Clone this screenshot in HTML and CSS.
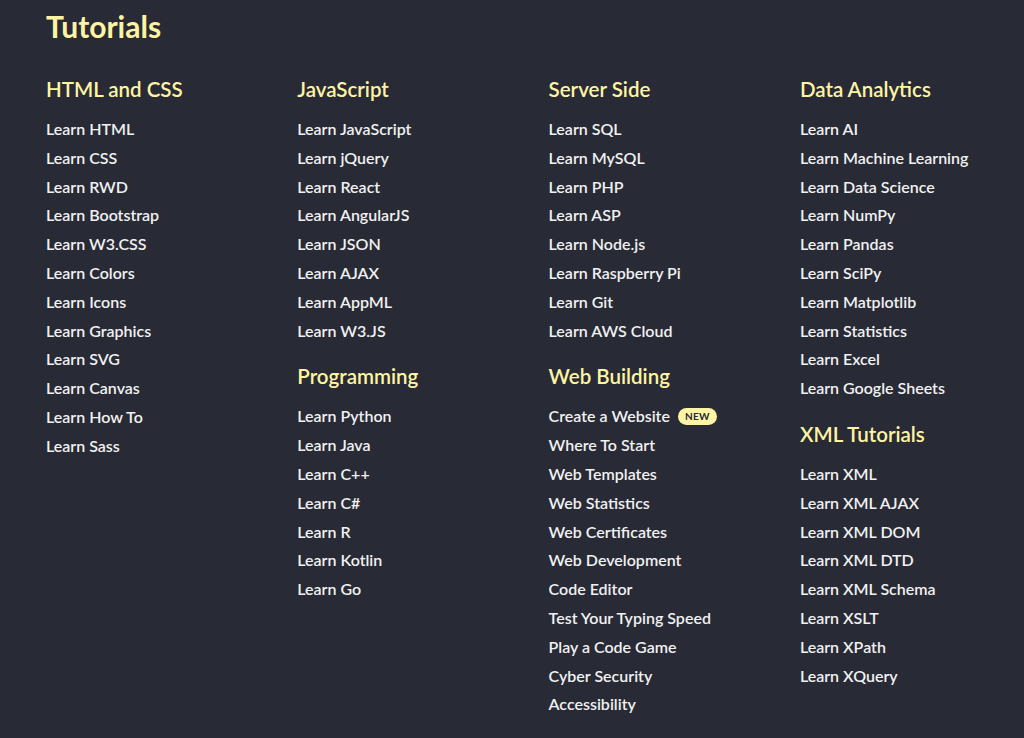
FILE: index.html
```html
<!DOCTYPE html>
<html>
<head>
<meta charset="utf-8">
<link rel="stylesheet" href="styles.css">
</head>
<body>
<div class="menu">
  <h2 class="title">Tutorials</h2>
  <div class="cols">
    <div class="col">
      <h3>HTML and CSS</h3>
      <a>Learn HTML</a><a>Learn CSS</a><a>Learn RWD</a><a>Learn Bootstrap</a><a>Learn W3.CSS</a><a>Learn Colors</a><a>Learn Icons</a><a>Learn Graphics</a><a>Learn SVG</a><a>Learn Canvas</a><a>Learn How To</a><a>Learn Sass</a>
    </div>
    <div class="col">
      <h3>JavaScript</h3>
      <a>Learn JavaScript</a><a>Learn jQuery</a><a>Learn React</a><a>Learn AngularJS</a><a>Learn JSON</a><a>Learn AJAX</a><a>Learn AppML</a><a>Learn W3.JS</a>
      <h3 class="sub">Programming</h3>
      <a>Learn Python</a><a>Learn Java</a><a>Learn C++</a><a>Learn C#</a><a>Learn R</a><a>Learn Kotlin</a><a>Learn Go</a>
    </div>
    <div class="col">
      <h3>Server Side</h3>
      <a>Learn SQL</a><a>Learn MySQL</a><a>Learn PHP</a><a>Learn ASP</a><a>Learn Node.js</a><a>Learn Raspberry Pi</a><a>Learn Git</a><a>Learn AWS Cloud</a>
      <h3 class="sub">Web Building</h3>
      <a>Create a Website <span class="new">NEW</span></a><a>Where To Start</a><a>Web Templates</a><a>Web Statistics</a><a>Web Certificates</a><a>Web Development</a><a>Code Editor</a><a>Test Your Typing Speed</a><a>Play a Code Game</a><a>Cyber Security</a><a>Accessibility</a>
    </div>
    <div class="col">
      <h3>Data Analytics</h3>
      <a>Learn AI</a><a>Learn Machine Learning</a><a>Learn Data Science</a><a>Learn NumPy</a><a>Learn Pandas</a><a>Learn SciPy</a><a>Learn Matplotlib</a><a>Learn Statistics</a><a>Learn Excel</a><a>Learn Google Sheets</a>
      <h3 class="sub">XML Tutorials</h3>
      <a>Learn XML</a><a>Learn XML AJAX</a><a>Learn XML DOM</a><a>Learn XML DTD</a><a>Learn XML Schema</a><a>Learn XSLT</a><a>Learn XPath</a><a>Learn XQuery</a>
    </div>
  </div>
</div>
</body>
</html>
```

FILE: styles.css
```css
html, body {
  margin: 0;
  padding: 0;
  background: #282a35;
  height: 100%;
  overflow: hidden;
}
body {
  font-family: "Source Sans Pro", Lato, "Noto Sans", sans-serif;
  color: #f1f1f1;
}
.menu {
  padding: 0 0 0 46px;
}
.title {
  margin: 0;
  padding-top: 8px;
  font-size: 30px;
  font-weight: 700;
  color: #fff4a3;
  line-height: 36px;
}
.cols {
  display: grid;
  grid-template-columns: repeat(4, 251.3px);
  margin-top: 30px;
}
.col {
  display: flex;
  flex-direction: column;
  align-items: flex-start;
}
.col h3 {
  margin: 0 0 11px 0;
  font-size: 20.5px;
  font-weight: 600;
  color: #fff4a3;
  line-height: 30px;
}
.col h3.sub {
  margin-top: 16px;
}
.col a {
  display: flex;
  align-items: center;
  font-size: 16px;
  font-weight: 600;
  line-height: 28.8px;
  color: #f1f1f1;
  white-space: nowrap;
}
.new {
  display: inline-block;
  margin-left: 8px;
  background: #fff4a3;
  color: #282a35;
  font-size: 10px;
  font-weight: 700;
  line-height: 17px;
  padding: 0 7px;
  border-radius: 9px;
  letter-spacing: 0.3px;
}
```
